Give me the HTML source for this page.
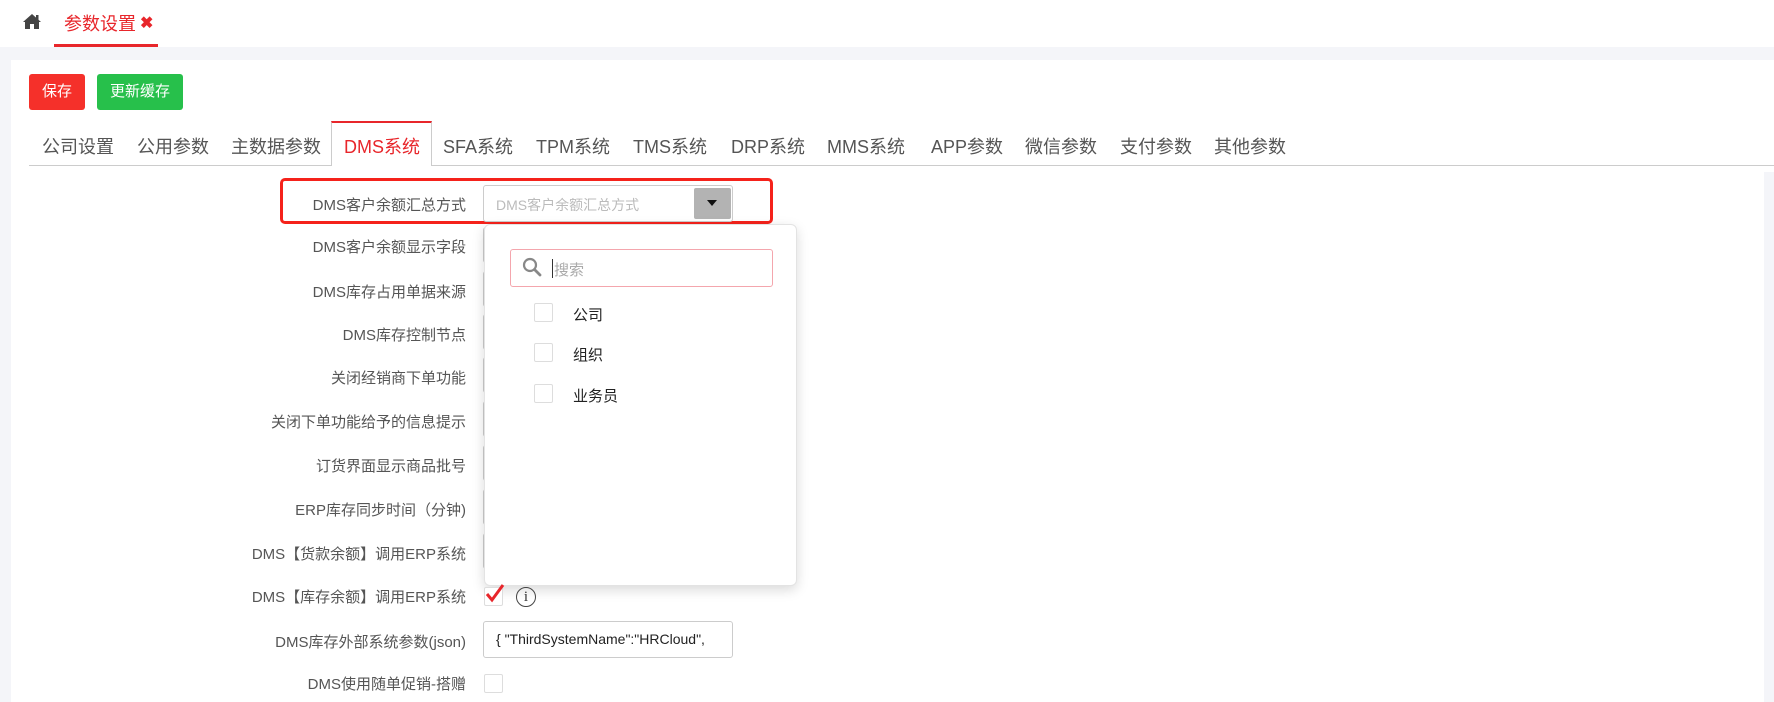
<!DOCTYPE html>
<html><head><meta charset="utf-8"><style>
*{box-sizing:border-box;margin:0;padding:0}
body{width:1774px;height:702px;overflow:hidden;background:#fff;font-family:"Liberation Sans","Noto Sans CJK SC",sans-serif;position:relative;color:#333}
.a{position:absolute}
.band{left:0;top:47px;width:1774px;height:13px;background:#f4f5f9}
.lside{left:0;top:60px;width:11px;height:642px;background:#f4f5f9}
.btn{top:74px;height:36px;color:#fff;font-size:15px;line-height:36px;text-align:center;border-radius:3px}
.tab{top:133px;font-size:18px;color:#555;white-space:nowrap}
.lbl{right:1308px;font-size:15px;color:#555;white-space:nowrap;text-align:right}
.inp{left:483px;width:250px;height:36px;border:1px solid #ccc;border-radius:3px;background:#fff}
.cb{width:19px;height:19px;border:1px solid #ddd;border-radius:2px;background:#fff}
</style></head><body>
<svg class="a" style="left:22px;top:13px" width="20" height="17" viewBox="0 0 20 17"><path d="M10 1 L1 9 L3 9 L3 16 L8 16 L8 11 L12 11 L12 16 L17 16 L17 9 L19 9 Z" fill="#444"/><rect x="14" y="2" width="2.5" height="5" fill="#444"/></svg>
<div class="a" style="left:64px;top:10px;font-size:18px;color:#e8262b">参数设置</div>
<div class="a" style="left:140px;top:13px;font-size:16px;color:#e8262b;font-weight:bold">✖</div>
<div class="a" style="left:54px;top:44px;width:104px;height:3px;background:#e8262b"></div>
<div class="a band"></div><div class="a lside"></div>
<div class="a btn" style="left:29px;width:56px;background:#f5302a">保存</div>
<div class="a btn" style="left:97px;width:86px;background:#27c04b">更新缓存</div>
<div class="a" style="left:29px;top:165px;width:1745px;height:1px;background:#ccc"></div>
<div class="a" style="left:331px;top:121px;width:101px;height:45px;background:#fff;border:1px solid #ccc;border-top:2px solid #e8262b;border-bottom:none"></div>
<div class="a tab" style="left:42px">公司设置</div>
<div class="a tab" style="left:137px">公用参数</div>
<div class="a tab" style="left:231px">主数据参数</div>
<div class="a tab" style="left:344px;color:#e8262b">DMS系统</div>
<div class="a tab" style="left:443px">SFA系统</div>
<div class="a tab" style="left:536px">TPM系统</div>
<div class="a tab" style="left:633px">TMS系统</div>
<div class="a tab" style="left:731px">DRP系统</div>
<div class="a tab" style="left:827px">MMS系统</div>
<div class="a tab" style="left:931px">APP参数</div>
<div class="a tab" style="left:1025px">微信参数</div>
<div class="a tab" style="left:1120px">支付参数</div>
<div class="a tab" style="left:1214px">其他参数</div>
<div class="a" style="left:1764px;top:172px;width:10px;height:530px;background:#f4f5f9"></div>

<div class="a lbl" style="top:194px">DMS客户余额汇总方式</div>
<div class="a lbl" style="top:236px">DMS客户余额显示字段</div>
<div class="a lbl" style="top:281px">DMS库存占用单据来源</div>
<div class="a lbl" style="top:324px">DMS库存控制节点</div>
<div class="a lbl" style="top:367px">关闭经销商下单功能</div>
<div class="a lbl" style="top:411px">关闭下单功能给予的信息提示</div>
<div class="a lbl" style="top:455px">订货界面显示商品批号</div>
<div class="a lbl" style="top:499px">ERP库存同步时间（分钟)</div>
<div class="a lbl" style="top:543px">DMS【货款余额】调用ERP系统</div>
<div class="a lbl" style="top:586px">DMS【库存余额】调用ERP系统</div>
<div class="a lbl" style="top:631px">DMS库存外部系统参数(json)</div>
<div class="a lbl" style="top:673px">DMS使用随单促销-搭赠</div>

<div class="a inp" style="top:227px"></div>
<div class="a inp" style="top:271px"></div>
<div class="a inp" style="top:314px"></div>
<div class="a inp" style="top:357px"></div>
<div class="a inp" style="top:401px"></div>
<div class="a inp" style="top:445px"></div>
<div class="a inp" style="top:489px"></div>
<div class="a inp" style="top:533px"></div>

<div class="a" style="left:280px;top:178px;width:493px;height:46px;border:3px solid #f5221b;border-radius:5px"></div>
<div class="a inp" style="top:185px;height:37px;padding:9px 0 0 12px;font-size:14px;color:#bbb">DMS客户余额汇总方式</div>
<div class="a" style="left:694px;top:188px;width:37px;height:31px;background:#b3b3b3;border-radius:2px"><div class="a" style="left:13px;top:12px;border-left:5px solid transparent;border-right:5px solid transparent;border-top:6px solid #111"></div></div>

<div class="a" style="left:484px;top:224px;width:313px;height:362px;background:#fff;border:1px solid #e3e3e3;border-radius:6px;box-shadow:0 4px 12px rgba(0,0,0,.15)"></div>
<div class="a" style="left:510px;top:249px;width:263px;height:38px;border:1px solid #f4a6ad;border-radius:3px"></div>
<svg class="a" style="left:522px;top:257px" width="20" height="20" viewBox="0 0 20 20"><circle cx="8" cy="8" r="6" fill="none" stroke="#888" stroke-width="2.2"/><path d="M12.5 12.5 L18 18" stroke="#888" stroke-width="2.8" stroke-linecap="round"/></svg>
<div class="a" style="left:552px;top:259px;width:1px;height:19px;background:#333"></div>
<div class="a" style="left:554px;top:259px;font-size:15px;color:#aaa">搜索</div>
<div class="a cb" style="left:534px;top:303px"></div><div class="a" style="left:573px;top:304px;font-size:15px;color:#222">公司</div>
<div class="a cb" style="left:534px;top:343px"></div><div class="a" style="left:573px;top:344px;font-size:15px;color:#222">组织</div>
<div class="a cb" style="left:534px;top:384px"></div><div class="a" style="left:573px;top:385px;font-size:15px;color:#222">业务员</div>

<div class="a cb" style="left:484px;top:587px"></div>
<svg class="a" style="left:484px;top:582px" width="22" height="22" viewBox="0 0 22 22"><path d="M3 12 L8 18 L19 3" fill="none" stroke="#e8262b" stroke-width="3"/></svg>
<div class="a" style="left:516px;top:587px;width:20px;height:20px;border:1.5px solid #444;border-radius:50%;font-family:'Liberation Serif',serif;font-size:15px;text-align:center;line-height:18px;color:#333">i</div>
<div class="a inp" style="top:621px;height:37px;padding:9px 0 0 12px;font-size:14px;color:#222;white-space:nowrap;overflow:hidden">{ "ThirdSystemName":"HRCloud",</div>
<div class="a cb" style="left:484px;top:674px"></div>
</body></html>
